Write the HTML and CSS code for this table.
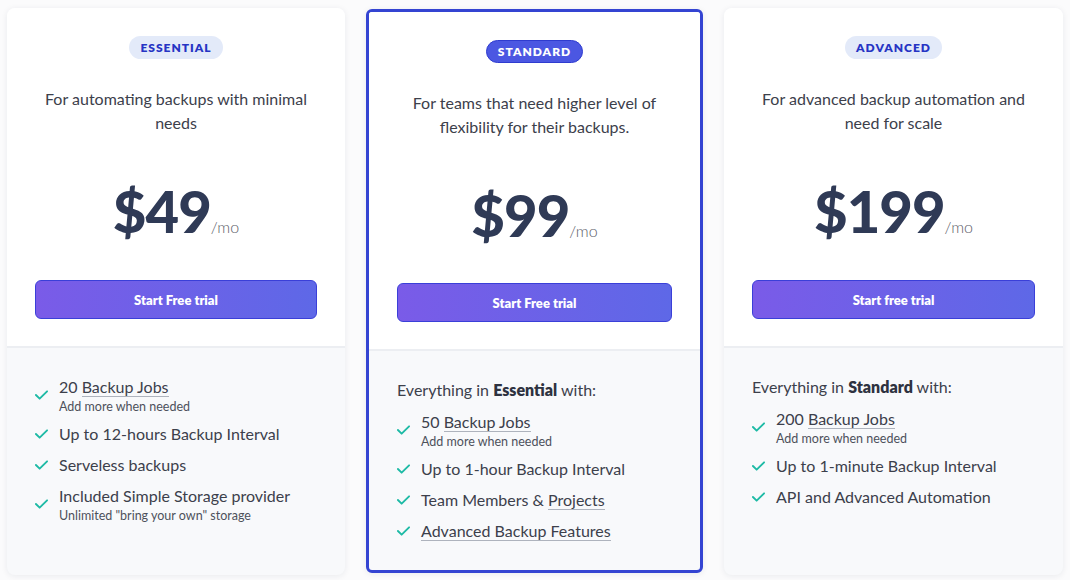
FILE: index.html
```html
<!DOCTYPE html>
<html>
<head>
<meta charset="utf-8">
<link rel="stylesheet" href="styles.css">
</head>
<body>
<div class="plans">
  <div class="card">
    <div class="top">
      <span class="badge">ESSENTIAL</span>
      <p class="desc">For automating backups with minimal needs</p>
      <div class="price"><span class="amount">$49</span><span class="per">/mo</span></div>
      <button class="cta">Start Free trial</button>
    </div>
    <div class="bottom">
      <ul class="features">
        <li><svg class="check" viewBox="0 0 14 10"><path d="M1 5l4 4 8-8"/></svg><div><span class="main">20 <span class="ul">Backup Jobs</span></span><span class="sub">Add more when needed</span></div></li>
        <li><svg class="check" viewBox="0 0 14 10"><path d="M1 5l4 4 8-8"/></svg><div><span class="main">Up to 12-hours Backup Interval</span></div></li>
        <li><svg class="check" viewBox="0 0 14 10"><path d="M1 5l4 4 8-8"/></svg><div><span class="main">Serveless backups</span></div></li>
        <li><svg class="check" viewBox="0 0 14 10"><path d="M1 5l4 4 8-8"/></svg><div><span class="main">Included Simple Storage provider</span><span class="sub">Unlimited "bring your own" storage</span></div></li>
      </ul>
    </div>
  </div>
  <div class="card featured">
    <div class="top">
      <span class="badge">STANDARD</span>
      <p class="desc">For teams that need higher level of flexibility for their backups.</p>
      <div class="price"><span class="amount">$99</span><span class="per">/mo</span></div>
      <button class="cta">Start Free trial</button>
    </div>
    <div class="bottom">
      <p class="intro">Everything in <b>Essential</b> with:</p>
      <ul class="features">
        <li><svg class="check" viewBox="0 0 14 10"><path d="M1 5l4 4 8-8"/></svg><div><span class="main">50 <span class="ul">Backup Jobs</span></span><span class="sub">Add more when needed</span></div></li>
        <li><svg class="check" viewBox="0 0 14 10"><path d="M1 5l4 4 8-8"/></svg><div><span class="main">Up to 1-hour Backup Interval</span></div></li>
        <li><svg class="check" viewBox="0 0 14 10"><path d="M1 5l4 4 8-8"/></svg><div><span class="main">Team Members &amp; <span class="ul">Projects</span></span></div></li>
        <li><svg class="check" viewBox="0 0 14 10"><path d="M1 5l4 4 8-8"/></svg><div><span class="main"><span class="ul">Advanced Backup Features</span></span></div></li>
      </ul>
    </div>
  </div>
  <div class="card">
    <div class="top">
      <span class="badge">ADVANCED</span>
      <p class="desc">For advanced backup automation and need for scale</p>
      <div class="price"><span class="amount">$199</span><span class="per">/mo</span></div>
      <button class="cta">Start free trial</button>
    </div>
    <div class="bottom">
      <p class="intro">Everything in <b>Standard</b> with:</p>
      <ul class="features">
        <li><svg class="check" viewBox="0 0 14 10"><path d="M1 5l4 4 8-8"/></svg><div><span class="main">200 <span class="ul">Backup Jobs</span></span><span class="sub">Add more when needed</span></div></li>
        <li><svg class="check" viewBox="0 0 14 10"><path d="M1 5l4 4 8-8"/></svg><div><span class="main">Up to 1-minute Backup Interval</span></div></li>
        <li><svg class="check" viewBox="0 0 14 10"><path d="M1 5l4 4 8-8"/></svg><div><span class="main">API and Advanced Automation</span></div></li>
      </ul>
    </div>
  </div>
</div>
</body>
</html>
```

FILE: styles.css
```css
* { box-sizing: border-box; }
html, body { margin: 0; padding: 0; background: #fbfbfc; }
body { font-family: "Lato", "Noto Sans", sans-serif; color: #3a3f4b; }

.plans {
  display: grid;
  grid-template-columns: 338px 337px 339px;
  gap: 21px;
  padding: 8px 7px 5px;
  height: 580px;
}

.card {
  display: flex;
  flex-direction: column;
  background: #f8f9fb;
  border-radius: 8px;
  box-shadow: 0 1px 6px rgba(30, 40, 70, 0.08);
  overflow: hidden;
}
.card.featured {
  border: 3px solid #3444d2;
  border-radius: 6px;
  margin-top: 1px;
  margin-bottom: 2px;
}

.top {
  background: #fff;
  display: flex;
  flex-direction: column;
  align-items: center;
  padding: 28px 28px 27px;
  border-bottom: 2px solid #eceef2;
  height: 340px;
  flex: none;
}
.featured .top { padding-top: 28px; height: 339px; }

.badge {
  display: inline-block;
  height: 23px;
  line-height: 23px;
  padding: 0 11px;
  border-radius: 12px;
  background: #e3eaf9;
  color: #2634c4;
  font-size: 12px;
  font-weight: 800;
  letter-spacing: 1px;
}
.featured .badge {
  background: #4b57e2;
  color: #fff;
  border: 1px solid #2f3ccf;
  line-height: 21px;
}

.desc {
  margin: 28px 0 0;
  font-size: 16px;
  line-height: 24px;
  text-align: center;
  color: #3c404b;
  width: 100%;
}
.featured .desc { padding: 0 12px; }

.price {
  margin-top: 41px;
  display: flex;
  align-items: baseline;
  color: #2f3a56;
}
.amount {
  font-size: 58px;
  font-weight: 900;
  letter-spacing: -1px;
  line-height: 70px;
}
.per {
  font-size: 16px;
  color: #5c606a;
  font-weight: 300;
}

.cta {
  margin-top: auto;
  width: 100%;
  height: 39px;
  border-radius: 6px;
  border: 1px solid #3a3fd8;
  background: linear-gradient(90deg, #7a5be8, #5e68e7);
  color: #fff;
  font-family: inherit;
  font-size: 13px;
  font-weight: 800;
}

.bottom {
  padding: 27px 28px 20px;
  flex: 1;
}
.intro {
  margin: 0 0 8px;
  font-size: 16px;
  line-height: 24px;
  color: #3c404b;
}
.intro b { font-weight: 800; color: #2e3240; }

.features {
  list-style: none;
  margin: 0;
  padding: 0;
}
.features li {
  display: flex;
  align-items: center;
  gap: 11px;
  margin-bottom: 7px;
}
.check {
  width: 13px;
  height: 10px;
  flex: none;
  fill: none;
  stroke: #1dbaa5;
  stroke-width: 2;
  stroke-linecap: round;
  stroke-linejoin: round;
}
.main {
  display: block;
  font-size: 16px;
  line-height: 24px;
  color: #3c404b;
}
.sub {
  display: block;
  font-size: 12.5px;
  line-height: 16px;
  color: #4d515b;
}
.ul {
  border-bottom: 1px solid #aeb3bd;
}
```
